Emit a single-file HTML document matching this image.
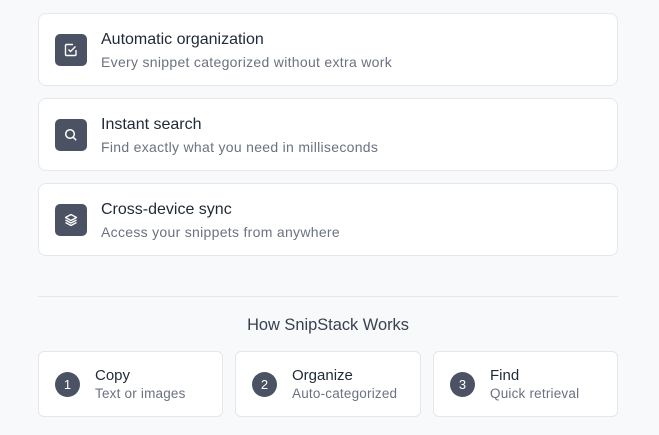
<!DOCTYPE html>
<html><head><style>
*{box-sizing:border-box;margin:0;padding:0}
body{width:659px;height:435px;background:#f8f9fb;font-family:"Liberation Sans",sans-serif;position:relative;overflow:hidden}
.card{position:absolute;left:38px;width:580px;height:73px;background:#fff;border:1px solid #e5e7eb;border-radius:8px}
.ic{position:absolute;left:16px;top:20px;width:32px;height:32px;border-radius:5px;background:#4b5263;display:flex;align-items:center;justify-content:center}
.t{position:absolute;left:62px;top:17px;font-size:16px;color:#1f2937}
.d{position:absolute;left:62px;top:40px;font-size:14px;letter-spacing:0.3px;color:#6b7280}
.hr{position:absolute;left:38px;width:580px;top:296px;height:1px;background:#e5e7eb}
h2{position:absolute;top:316px;left:0;width:656px;text-align:center;font-size:16.4px;font-weight:normal;color:#374151}
.s{position:absolute;top:351px;height:66px;background:#fff;border:1px solid #e5e7eb;border-radius:6px}
.n{position:absolute;left:16px;top:20px;width:25px;height:25px;border-radius:50%;background:#4b5263;color:#fff;font-size:13px;display:flex;align-items:center;justify-content:center}
.st{position:absolute;left:56px;top:15px;font-size:15px;color:#1f2937}
.sd{position:absolute;left:56px;top:34px;font-size:13.5px;letter-spacing:0.2px;color:#6b7280}
</style></head><body>
<div class="card" style="top:13px"><div class="ic"><svg width="14" height="14" viewBox="0 0 14 14" fill="none" stroke="#fff" stroke-width="1.4"><path d="M12 7v4.5a1 1 0 0 1-1 1H2.5a1 1 0 0 1-1-1V2.5a1 1 0 0 1 1-1H9"/><path d="M4.5 6.5l2 2 5-5"/></svg></div><div class="t">Automatic organization</div><div class="d">Every snippet categorized without extra work</div></div>
<div class="card" style="top:98px"><div class="ic"><svg width="14" height="14" viewBox="0 0 14 14" fill="none" stroke="#fff" stroke-width="1.5"><circle cx="6" cy="6" r="4.3"/><path d="M9.2 9.2l3 3"/></svg></div><div class="t">Instant search</div><div class="d">Find exactly what you need in milliseconds</div></div>
<div class="card" style="top:183px"><div class="ic"><svg width="14" height="14" viewBox="0 0 14 14" fill="none" stroke="#fff" stroke-width="1.3" stroke-linejoin="round"><path d="M7 1.5l5.5 3L7 7.5 1.5 4.5z"/><path d="M1.5 7L7 10l5.5-3"/><path d="M1.5 9.5L7 12.5l5.5-3"/></svg></div><div class="t">Cross-device sync</div><div class="d">Access your snippets from anywhere</div></div>
<div class="hr"></div>
<h2>How SnipStack Works</h2>
<div class="s" style="left:38px;width:185px"><div class="n">1</div><div class="st">Copy</div><div class="sd">Text or images</div></div>
<div class="s" style="left:235px;width:186px"><div class="n">2</div><div class="st">Organize</div><div class="sd">Auto-categorized</div></div>
<div class="s" style="left:433px;width:185px"><div class="n">3</div><div class="st">Find</div><div class="sd">Quick retrieval</div></div>
</body></html>
